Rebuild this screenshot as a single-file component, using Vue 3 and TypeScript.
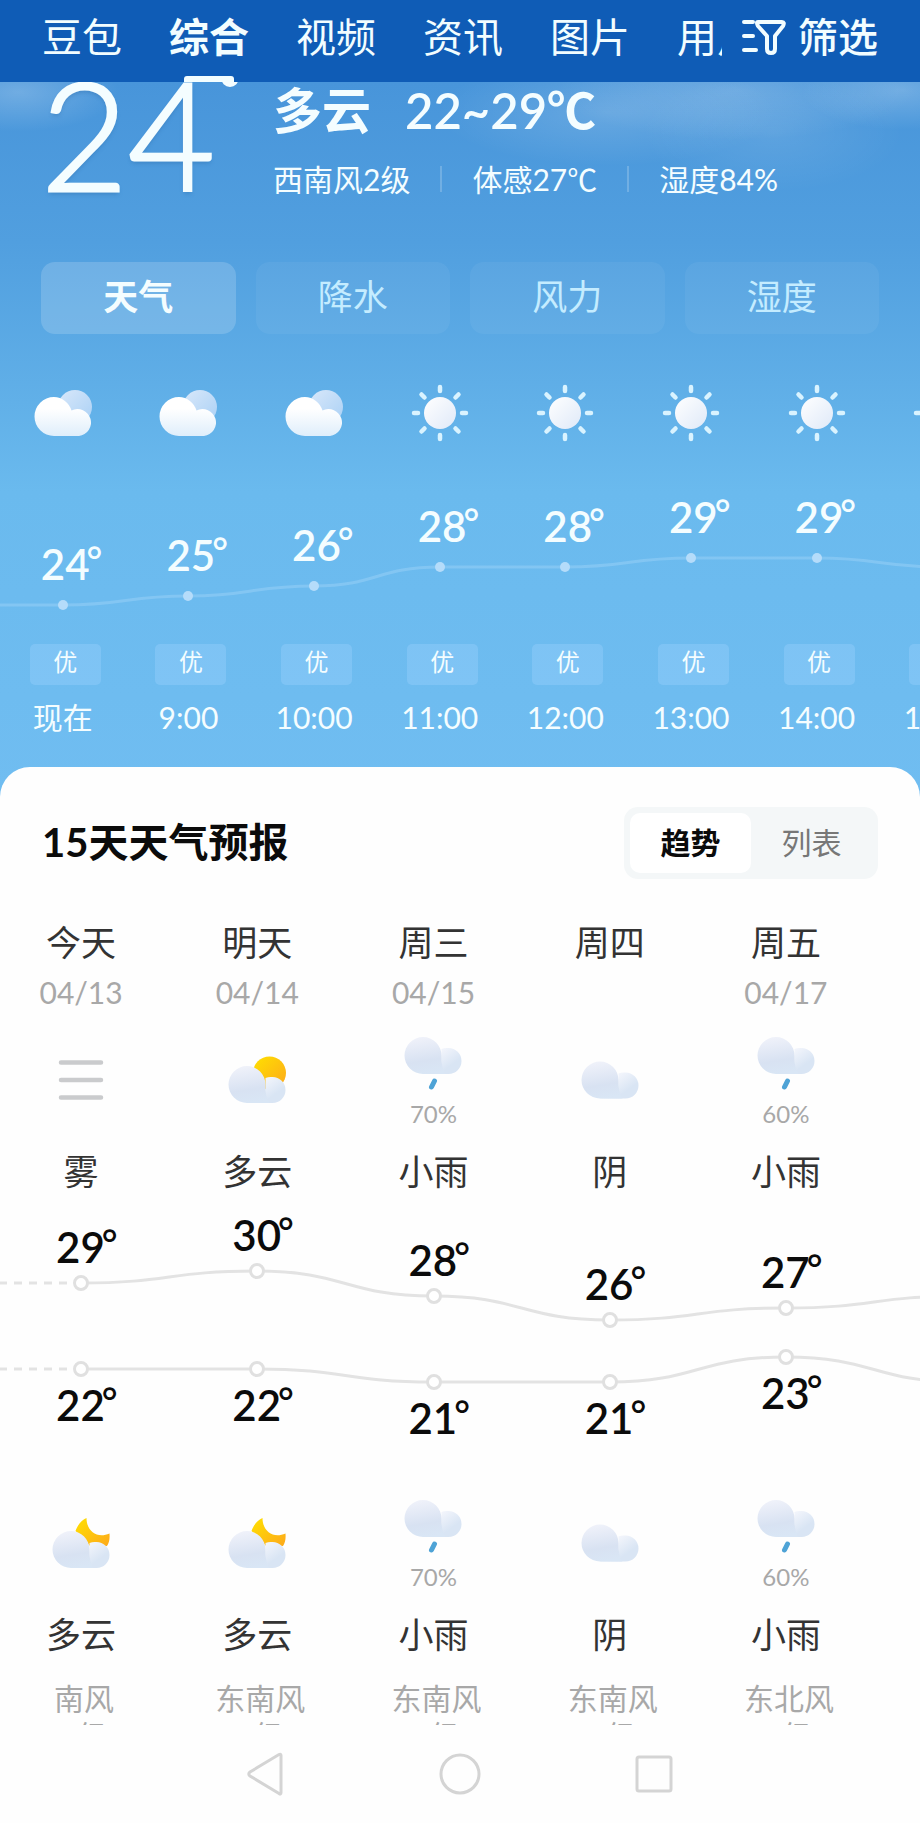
<script setup lang="ts">
import { ref } from 'vue'

type HourIcon = 'hour-cloud' | 'hour-sun'
type DayIcon = 'fog' | 'sun-cloud' | 'moon-cloud' | 'cloud' | 'rain'

interface Hour {
  time: string
  temp: number
  air: string
  icon: HourIcon
}

interface HalfDay {
  icon: DayIcon
  chance?: string
  text: string
}

interface Day {
  name: string
  date: string
  high: number
  low: number
  day: HalfDay
  night: HalfDay
  wind: string
  level: string
}

const channels = ['豆包', '综合', '视频', '资讯', '图片', '用户']
const activeChannel = ref('综合')

const metrics = ['天气', '降水', '风力', '湿度']
const activeMetric = ref('天气')

const views = ['趋势', '列表']
const activeView = ref('趋势')

const hours: Hour[] = [
  { time: '现在', temp: 24, air: '优', icon: 'hour-cloud' },
  { time: '9:00', temp: 25, air: '优', icon: 'hour-cloud' },
  { time: '10:00', temp: 26, air: '优', icon: 'hour-cloud' },
  { time: '11:00', temp: 28, air: '优', icon: 'hour-sun' },
  { time: '12:00', temp: 28, air: '优', icon: 'hour-sun' },
  { time: '13:00', temp: 29, air: '优', icon: 'hour-sun' },
  { time: '14:00', temp: 29, air: '优', icon: 'hour-sun' },
  { time: '15:00', temp: 28, air: '优', icon: 'hour-sun' },
]

const rain = (chance: string): HalfDay => ({ icon: 'rain', chance, text: '小雨' })

const days: Day[] = [
  { name: '今天', date: '04/13', high: 29, low: 22, day: { icon: 'fog', text: '雾' }, night: { icon: 'moon-cloud', text: '多云' }, wind: '南风', level: '2级' },
  { name: '明天', date: '04/14', high: 30, low: 22, day: { icon: 'sun-cloud', text: '多云' }, night: { icon: 'moon-cloud', text: '多云' }, wind: '东南风', level: '2级' },
  { name: '周三', date: '04/15', high: 28, low: 21, day: rain('70%'), night: rain('70%'), wind: '东南风', level: '2级' },
  { name: '周四', date: '', high: 26, low: 21, day: { icon: 'cloud', text: '阴' }, night: { icon: 'cloud', text: '阴' }, wind: '东南风', level: '2级' },
  { name: '周五', date: '04/17', high: 27, low: 23, day: rain('60%'), night: rain('60%'), wind: '东北风', level: '2级' },
]

const STEP = 100
const centre = (i: number): number => i * STEP + STEP / 2

const hourY = (t: number): number => Math.round(163 - (t - 24) * 9.4)
const highY = (t: number): number => Math.round(78 + (30 - t) * 12.3)
const lowY = (t: number): number => Math.round(164 + (23 - t) * 12.3)

/* Smooth line through the column centres, level at every point. */
function curve(ys: number[]): string {
  let d = `M${centre(0)},${ys[0]}`
  for (let i = 1; i < ys.length; i++) {
    const mid = centre(i) - STEP / 2
    d += ` C${mid},${ys[i - 1]} ${mid},${ys[i]} ${centre(i)},${ys[i]}`
  }
  return d
}

const hourLine = `M0,${hourY(hours[0].temp)} L` + curve(hours.map((h) => hourY(h.temp))).slice(1)
const highLine = curve([...days.map((d) => highY(d.high)), highY(28)])
const lowLine = curve([...days.map((d) => lowY(d.low)), lowY(21)])

const place = (i: number, count: number, y: number) => ({
  left: `${((i + 0.5) * 100) / count}%`,
  top: `${y}px`,
})
</script>

<template>
  <div class="page">
    <svg class="defs" aria-hidden="true">
      <defs>
        <linearGradient id="g-white" x1="0" y1="0" x2="0" y2="1">
          <stop offset="0.3" stop-color="#ffffff" />
          <stop offset="1" stop-color="#dfeefb" />
        </linearGradient>
        <linearGradient id="g-back" x1="0" y1="0" x2="1" y2="1">
          <stop offset="0" stop-color="#d9e8fa" />
          <stop offset="1" stop-color="#a9d0f5" />
        </linearGradient>
        <linearGradient id="g-disc" x1="0" y1="0" x2="1" y2="1">
          <stop offset="0" stop-color="#ffffff" />
          <stop offset="1" stop-color="#dfe9f8" />
        </linearGradient>
        <linearGradient id="g-grey" gradientUnits="userSpaceOnUse" x1="14" y1="0" x2="20" y2="37">
          <stop offset="0" stop-color="#f0f2fa" />
          <stop offset="0.65" stop-color="#d8e2f2" />
          <stop offset="1" stop-color="#d9e6f5" />
        </linearGradient>
        <linearGradient id="g-lobe" gradientUnits="userSpaceOnUse" x1="37" y1="14" x2="47" y2="28">
          <stop offset="0" stop-color="#f1f4fb" />
          <stop offset="1" stop-color="#d9e5f4" />
        </linearGradient>
        <linearGradient id="g-sun" x1="0" y1="0" x2="1" y2="1">
          <stop offset="0" stop-color="#ffe100" />
          <stop offset="1" stop-color="#fda81c" />
        </linearGradient>
        <g id="puff">
          <path d="M37 12A13 13 0 0 1 44 11A13 13 0 0 1 44 37H18L37 30Z" fill="url(#g-lobe)" />
          <path d="M18.500 0A18.500 18.500 0 0 1 37 18.500C37 27 38 33 41 37H18.500A18.500 18.500 0 0 1 18.500 0Z" fill="url(#g-grey)" />
        </g>
        <symbol id="hour-cloud" viewBox="0 0 60 60">
          <circle cx="42" cy="25" r="17" fill="url(#g-back)" />
          <path d="M21 15A19 19 0 0 1 38.500 28.500A13.500 13.500 0 1 1 46 54H21A19.500 19.500 0 0 1 21 15Z" fill="url(#g-white)" />
        </symbol>
        <symbol id="hour-sun" viewBox="0 0 60 60">
          <circle cx="30" cy="31" r="16" fill="url(#g-disc)" />
          <path d="M30 5v4M30 53v4M4 31h4M52 31h4M11.500 12.500l3 3M45.500 46.500l3 3M48.500 12.500l-3 3M14.500 46.500l-3 3" fill="none" stroke="#d9f3ff" stroke-width="4.500" stroke-linecap="round" />
        </symbol>
        <symbol id="fog" viewBox="0 0 60 60">
          <path d="M10 12.500H50M10 30H50M10 47.500H50" fill="none" stroke="#cacbcd" stroke-width="4.500" stroke-linecap="round" />
        </symbol>
        <symbol id="sun-cloud" viewBox="0 0 60 60">
          <circle cx="42.500" cy="23" r="16.500" fill="url(#g-sun)" />
          <use href="#puff" x="1.500" y="16" />
        </symbol>
        <symbol id="moon-cloud" viewBox="0 0 60 60">
          <path d="M35.500 5C35.500 18 46 26 58.500 20.500C59 26 58 30 56 33L40 34L24.500 18C27 11 31 7 35.500 5Z" fill="url(#g-sun)" />
          <use href="#puff" x="1.500" y="18" />
        </symbol>
        <symbol id="cloud" viewBox="0 0 60 60">
          <use href="#puff" x="1.500" y="11.500" />
        </symbol>
        <symbol id="rain" viewBox="0 0 60 60">
          <use href="#puff" x="1.500" y="4" />
          <path d="M31.500 48L28.500 54" fill="none" stroke="#4ea3d6" stroke-width="5" stroke-linecap="round" />
        </symbol>
      </defs>
    </svg>

    <header class="topbar">
      <nav class="channels" aria-label="频道">
        <a
          v-for="c in channels"
          :key="c"
          href="#"
          class="channel"
          :class="{ active: c === activeChannel }"
          @click.prevent="activeChannel = c"
        >{{ c }}</a>
      </nav>
      <button type="button" class="filter">
        <svg class="filter-icon" viewBox="0 0 44 38" aria-hidden="true">
          <path d="M2 4H11M2 18H11M2 32H14" />
          <path d="M16 4H40Q43 4 41 8L33 18V31Q33 35 29 35T25 31V18L16 8Q14 4 16 4Z" />
        </svg>
        <span>筛选</span>
      </button>
    </header>

    <section class="sky">
      <div class="now">
        <div class="now-temp">24</div>
        <div class="now-info">
          <div class="now-main"><span class="now-cond">多云</span><span class="now-range">22~29℃</span></div>
          <div class="now-facts">
            <span>西南风2级</span><span>体感27℃</span><span>湿度84%</span>
          </div>
        </div>
      </div>

      <div class="metrics">
        <button
          v-for="m in metrics"
          :key="m"
          type="button"
          class="metric"
          :class="{ active: m === activeMetric }"
          @click="activeMetric = m"
        >{{ m }}</button>
      </div>

      <div class="hourly">
        <div class="hour-row">
          <svg v-for="h in hours" :key="h.time" class="icon" aria-hidden="true"><use :href="'#' + h.icon" /></svg>
        </div>
        <div class="hour-chart">
          <svg class="lines" viewBox="0 0 800 202" preserveAspectRatio="none" aria-hidden="true">
            <path :d="hourLine" class="hour-line" />
          </svg>
          <div v-for="(h, i) in hours" :key="h.time" class="point" :style="place(i, hours.length, hourY(h.temp))">
            <span class="temp">{{ h.temp }}<span class="degree">°</span></span>
            <i class="hour-dot"></i>
          </div>
        </div>
        <div class="hour-row">
          <div v-for="h in hours" :key="h.time" class="hour-foot">
            <span class="air">{{ h.air }}</span>
            <span class="time">{{ h.time }}</span>
          </div>
        </div>
      </div>
    </section>

    <section class="card">
      <div class="card-head">
        <h2>15天天气预报</h2>
        <div class="toggle">
          <button
            v-for="v in views"
            :key="v"
            type="button"
            :class="{ active: v === activeView }"
            @click="activeView = v"
          >{{ v }}</button>
        </div>
      </div>

      <div class="forecast">
        <div class="day-row">
          <div v-for="d in days" :key="d.name" class="day">
            <span class="day-name">{{ d.name }}</span>
            <span class="day-date">{{ d.date }}</span>
            <div class="sign">
              <svg class="icon" aria-hidden="true"><use :href="'#' + d.day.icon" /></svg>
              <span v-if="d.day.chance" class="chance">{{ d.day.chance }}</span>
            </div>
            <span class="cond">{{ d.day.text }}</span>
          </div>
        </div>

        <div class="day-chart">
          <svg class="lines" viewBox="0 0 500 300" preserveAspectRatio="none" aria-hidden="true">
            <path :d="highLine" class="day-line" />
            <path :d="lowLine" class="day-line" />
            <path :d="`M42,${highY(29)} H0`" class="day-line dashed" />
            <path :d="`M42,${lowY(22)} H0`" class="day-line dashed" />
          </svg>
          <div v-for="(d, i) in days" :key="'high' + d.name" class="point" :style="place(i, days.length, highY(d.high))">
            <span class="temp high">{{ d.high }}<span class="degree">°</span></span>
            <i class="day-dot"></i>
          </div>
          <div v-for="(d, i) in days" :key="'low' + d.name" class="point" :style="place(i, days.length, lowY(d.low))">
            <span class="temp low">{{ d.low }}<span class="degree">°</span></span>
            <i class="day-dot"></i>
          </div>
        </div>

        <div class="day-row">
          <div v-for="d in days" :key="d.name" class="day">
            <div class="sign">
              <svg class="icon" aria-hidden="true"><use :href="'#' + d.night.icon" /></svg>
              <span v-if="d.night.chance" class="chance">{{ d.night.chance }}</span>
            </div>
            <span class="cond">{{ d.night.text }}</span>
            <div class="wind"><span>{{ d.wind }}</span><span>{{ d.level }}</span></div>
          </div>
        </div>
      </div>
    </section>

    <footer class="sysbar">
      <button type="button" aria-label="返回">
        <svg viewBox="0 0 44 44" aria-hidden="true"><path d="M37 3.500V40.500Q37 43 35 41.500L6 24Q3.500 22 6 20L35 2.500Q37 1.500 37 3.500Z" /></svg>
      </button>
      <button type="button" aria-label="主页">
        <svg viewBox="0 0 44 44" aria-hidden="true"><circle cx="22" cy="22" r="19" /></svg>
      </button>
      <button type="button" aria-label="最近任务">
        <svg viewBox="0 0 44 44" aria-hidden="true"><rect x="5" y="5" width="34" height="34" rx="2" /></svg>
      </button>
    </footer>
  </div>
</template>

<style>
body {
  margin: 0;
  background: #fefefe;
}
</style>

<style scoped>
.page {
  font-family: Lato, "Noto Sans CJK SC", sans-serif;
  color: #333;
  overflow: hidden;
}
.page * {
  box-sizing: border-box;
}
button {
  font: inherit;
  color: inherit;
  border: 0;
  padding: 0;
  background: none;
  cursor: pointer;
}
.defs {
  position: absolute;
  width: 0;
  height: 0;
}
.icon {
  display: block;
  flex: none;
  width: 60px;
  height: 60px;
}

.topbar {
  position: relative;
  z-index: 2;
  display: flex;
  align-items: center;
  gap: 20px;
  height: 82px;
  padding: 0 42px;
  background: #0f5cb6;
  color: #f2fdff;
  font-size: 40px;
  line-height: 74px;
}
.channels {
  flex: 1;
  min-width: 0;
  height: 82px;
  display: flex;
  gap: 47px;
  overflow: hidden;
}
.channel {
  position: relative;
  flex: none;
  color: inherit;
  text-decoration: none;
}
.channel.active {
  font-weight: 700;
}
.channel.active::after {
  content: "";
  position: absolute;
  left: 15px;
  right: 15px;
  bottom: 0;
  height: 6px;
  border-radius: 3px 3px 0 0;
  background: #f2fdff;
}
.filter {
  display: flex;
  align-items: center;
  gap: 12px;
  height: 82px;
  padding-bottom: 8px;
  font-weight: 500;
}
.filter-icon {
  width: 44px;
  height: 38px;
  fill: none;
  stroke: #f2fdff;
  stroke-width: 4;
  stroke-linecap: round;
  stroke-linejoin: round;
}

.sky {
  color: #f4fdff;
  padding-bottom: 60px;
  background:
    radial-gradient(ellipse 100px 40px at 2% 10px, rgba(255, 255, 255, 0.22), transparent),
    radial-gradient(ellipse 170px 54px at 66% 30px, rgba(255, 255, 255, 0.16), transparent),
    radial-gradient(ellipse 180px 50px at 80% 8px, rgba(255, 255, 255, 0.18), transparent),
    radial-gradient(ellipse 130px 60px at 84% 50px, rgba(255, 255, 255, 0.1), transparent),
    radial-gradient(ellipse 100px 40px at 98% 8px, rgba(255, 255, 255, 0.22), transparent),
    linear-gradient(#4895da, #519fdf 160px, #61b0e8 320px, #6abaee 410px, #70bdf1);
}
.now {
  position: relative;
  display: grid;
  grid-template-columns: 232px 1fr;
  padding: 0 41px;
}
.now-temp {
  font-size: 150px;
  line-height: 102px;
  font-weight: 300;
  -webkit-text-stroke: 3px #f4fdff;
  text-shadow: 0 3px 4px rgba(40, 100, 160, 0.4);
}
.now-temp::after {
  content: "";
  box-sizing: border-box;
  position: absolute;
  left: 221px;
  top: -13px;
  width: 18px;
  height: 18px;
  border: 5px solid #f4fdff;
  border-radius: 50%;
}
.now-main {
  display: flex;
  gap: 34px;
  font-size: 49px;
  line-height: 56px;
}
.now-cond {
  font-weight: 700;
}
.now-range {
  font-weight: 600;
}
.now-facts {
  display: flex;
  align-items: center;
  margin-top: 23px;
  margin-bottom: 1px;
  font-size: 30px;
  line-height: 36px;
}
.now-facts span + span {
  display: flex;
  align-items: center;
}
.now-facts span + span::before {
  content: "";
  width: 2px;
  height: 26px;
  margin: 0 30px;
  background: rgba(255, 255, 255, 0.2);
}

.metrics {
  display: grid;
  grid-template-columns: repeat(4, 1fr);
  gap: 20px;
  margin-top: 64px;
  padding: 0 41px;
}
.metric {
  height: 72px;
  padding-bottom: 4px;
  border-radius: 14px;
  background: rgba(255, 255, 255, 0.05);
  color: #c4ecff;
  font-size: 35px;
  line-height: 44px;
}
.metric.active {
  background: rgba(255, 255, 255, 0.17);
  color: #f4fdff;
  font-weight: 700;
}

.hourly {
  margin: 48px -85px 0 0;
}
.hour-row {
  display: grid;
  grid-template-columns: repeat(8, 1fr);
  justify-items: center;
}
.hour-chart {
  position: relative;
  height: 202px;
}
.lines {
  position: absolute;
  inset: 0;
  width: 100%;
  height: 100%;
  overflow: visible;
}
.lines path {
  fill: none;
  vector-effect: non-scaling-stroke;
}
.hour-line {
  stroke: rgba(190, 225, 255, 0.28);
  stroke-width: 3;
}
.point {
  position: absolute;
  width: 0;
  height: 0;
}
.temp {
  position: absolute;
  left: -22px;
  bottom: 17px;
  display: flex;
  font-size: 42px;
  line-height: 48px;
  font-weight: 600;
}
.degree {
  height: 48px;
  margin-left: -3px;
  font-size: 38px;
  line-height: 38px;
}
.hour-dot {
  position: absolute;
  left: -5px;
  top: -5px;
  width: 10px;
  height: 10px;
  border-radius: 50%;
  background: #b5dcfa;
}
.hour-foot {
  display: flex;
  flex-direction: column;
  align-items: center;
}
.air {
  width: 71px;
  height: 41px;
  margin-left: 5px;
  border-radius: 5px;
  background: rgba(160, 210, 255, 0.34);
  font-size: 24px;
  line-height: 35px;
  text-align: center;
}
.time {
  margin-top: 12px;
  font-size: 30px;
  line-height: 40px;
}

.card {
  position: relative;
  margin-top: -30px;
  padding-top: 40px;
  border-radius: 30px 30px 0 0;
  background: #fefefe;
  overflow: hidden;
}
.card-head {
  display: flex;
  align-items: center;
  justify-content: space-between;
  padding: 0 42px;
}
h2 {
  margin: 0;
  padding-bottom: 2px;
  color: #0b0b0b;
  font-size: 40px;
  line-height: 52px;
  font-weight: 700;
}
.toggle {
  display: flex;
  padding: 6px;
  border-radius: 14px;
  background: #f4f7f8;
}
.toggle button {
  width: 121px;
  height: 60px;
  padding-bottom: 3px;
  border-radius: 10px;
  color: #777;
  font-size: 30px;
  line-height: 40px;
}
.toggle .active {
  background: #fff;
  color: #0b0b0b;
  font-weight: 700;
}

.forecast {
  margin: 41px 46px 0 -7px;
}
.day-row {
  display: grid;
  grid-template-columns: repeat(5, 1fr);
}
.day {
  display: flex;
  flex-direction: column;
  align-items: center;
}
.day-name,
.cond {
  font-size: 35px;
  line-height: 44px;
}
.day-date {
  height: 32px;
  margin: 12px 0 22px;
  color: #a8a8a8;
  font-size: 30px;
  line-height: 32px;
}
.sign {
  display: flex;
  flex-direction: column;
  align-items: center;
  justify-content: center;
  height: 100px;
  margin-bottom: 19px;
}
.chance {
  margin-top: 7px;
  color: #a8a8a8;
  font-size: 24px;
  line-height: 28px;
}
.day-chart {
  position: relative;
  height: 300px;
}
.day-line {
  stroke: #e3e3e3;
  stroke-width: 3;
}
.dashed {
  stroke-dasharray: 8 7;
}
.day-chart .temp {
  left: -25px;
  color: #0b0b0b;
}
.temp.high {
  bottom: 12px;
}
.temp.low {
  top: 12px;
  bottom: auto;
}
.day-dot {
  position: absolute;
  left: -8px;
  top: -8px;
  width: 16px;
  height: 16px;
  border: 3px solid #e0e0e0;
  border-radius: 50%;
  background: #fff;
}
.wind {
  display: flex;
  flex-direction: column;
  align-items: center;
  height: 45px;
  margin-top: 24px;
  padding-left: 6px;
  color: #a8a8a8;
  font-size: 30px;
  line-height: 37px;
  overflow: hidden;
}

.sysbar {
  display: flex;
  align-items: center;
  justify-content: center;
  gap: 150px;
  height: 98px;
  background: #fefefe;
}
.sysbar button {
  width: 44px;
  height: 44px;
}
.sysbar svg {
  display: block;
  fill: none;
  stroke: #d4d4d4;
  stroke-width: 3;
}
</style>
